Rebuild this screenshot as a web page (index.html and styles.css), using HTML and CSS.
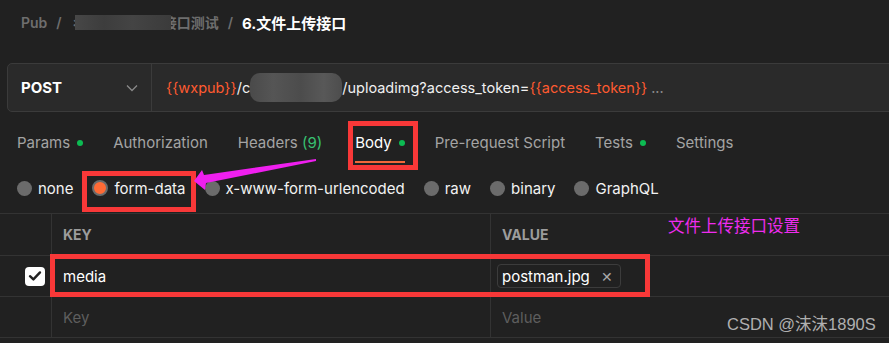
FILE: index.html
```html
<!DOCTYPE html>
<html>
<head>
<meta charset="utf-8">
<link rel="stylesheet" href="styles.css">
</head>
<body>
<div class="page">
  <div class="crumbs">
    <span class="crumb">Pub</span><span class="sep">/</span>
    <span class="crumb">彳<span class="blur-a"></span>接口测试</span><span class="sep">/</span>
    <span class="current">6.文件上传接口</span>
  </div>

  <div class="urlbar">
    <div class="method">
      <span>POST</span>
      <svg class="chev" width="12" height="8" viewBox="0 0 12 8"><path d="M1 1.5 L6 6.5 L11 1.5" fill="none" stroke="#8a8a8a" stroke-width="1.3"/></svg>
    </div>
    <div class="url"><span class="var">{{wxpub}}</span>/c<span class="blur-b"></span>/uploadimg?access_token=<span class="var">{{access_token}}</span><span class="more">...</span></div>
  </div>

  <div class="tabs">
    <div class="tab">Params<i class="dot"></i></div>
    <div class="tab">Authorization</div>
    <div class="tab headers">Headers <span class="count">(9)</span></div>
    <div class="tab active">Body<i class="dot"></i></div>
    <div class="tab">Pre-request Script</div>
    <div class="tab">Tests<i class="dot"></i></div>
    <div class="tab">Settings</div>
  </div>

  <div class="radios">
    <label class="radio"><i class="circle"></i>none</label>
    <label class="radio"><i class="circle on"></i>form-data</label>
    <label class="radio"><i class="circle"></i>x-www-form-urlencoded</label>
    <label class="radio"><i class="circle"></i>raw</label>
    <label class="radio"><i class="circle"></i>binary</label>
    <label class="radio"><i class="circle"></i>GraphQL</label>
  </div>

  <div class="table">
    <div class="row head">
      <div class="c0"></div>
      <div class="c1">KEY</div>
      <div class="c2">VALUE</div>
    </div>
    <div class="row">
      <div class="c0"><span class="check"><svg width="14" height="12" viewBox="0 0 14 12"><path d="M2 6.2 L5.4 9.4 L12 2.4" fill="none" stroke="#222" stroke-width="2.4" stroke-linecap="round" stroke-linejoin="round"/></svg></span></div>
      <div class="c1 val">media</div>
      <div class="c2 chipcell"><span class="chip">postman.jpg<span class="x">✕</span></span></div>
    </div>
    <div class="row">
      <div class="c0"></div>
      <div class="c1 ph">Key</div>
      <div class="c2 ph">Value</div>
    </div>
  </div>
</div>

<div class="box box-body"></div>
<div class="box box-form"></div>
<div class="box box-row"></div>
<svg class="arrow" width="889" height="343" viewBox="0 0 889 343">
  <polygon points="194,181 202,170 204,175 316,159 316,161 206,183 205,190" fill="#ef1fef"/>
</svg>
<div class="note">文件上传接口设置</div>
<div class="mark">CSDN @沫沫1890S</div>
</body>
</html>
```

FILE: styles.css
```css
html, body {
  margin: 0;
  padding: 0;
  background: #212121;
  overflow: hidden;
}
body {
  width: 889px;
  height: 343px;
  position: relative;
  font-family: Inter, "Noto Sans CJK SC", sans-serif;
  font-size: 15px;
  color: #e8e8e8;
}

.crumbs {
  height: 44px;
  display: flex;
  align-items: center;
  padding-left: 21px;
  font-weight: 600;
  font-size: 14px;
  color: #6e6e6e;
}
.sep { margin: 0 9px 0 11px; color: #6e6e6e; }
.blur-a {
  display: inline-block;
  width: 96px;
  height: 15px;
  vertical-align: -2px;
  margin: 0 -8px 0 -10px;
  position: relative;
  background: linear-gradient(90deg, #474747 0%, #3d3d3d 30%, #444 60%, #3b3b3b 100%);
}
.crumb + .sep { margin-left: 9px; }
.current { color: #ffffff; font-weight: 700; font-size: 15px; }

.urlbar {
  margin: 19px 0 0 7px;
  width: 900px;
  height: 47px;
  border: 1px solid #3b3b3b;
  border-radius: 5px;
  background: #2a2a2a;
  display: flex;
  align-items: center;
}
.method {
  height: 100%;
  padding: 0 13px 0 13px;
  border-right: 1px solid #3b3b3b;
  display: flex;
  align-items: center;
  justify-content: space-between;
  font-weight: 700;
  font-size: 15px;
  color: #fff;
  box-sizing: border-box;
  flex: 0 0 144px;
}
.url {
  padding-left: 14px;
  font-size: 14.5px;
  color: #f0f0f0;
  white-space: nowrap;
  display: flex;
  align-items: center;
}
.var { color: #ff5a30; }
.more { color: #8a8a8a; margin-left: 4px; }
.blur-b {
  display: inline-block;
  width: 92px;
  height: 29px;
  border-radius: 10px;
  background: linear-gradient(90deg, #4a4a4a 0%, #555 25%, #4c4c4c 55%, #585858 80%, #4d4d4d 100%);
}

.tabs {
  display: flex;
  margin-top: 12px;
  padding-left: 17px;
  gap: 30px;
  height: 39px;
}
.tab {
  height: 37px;
  display: flex;
  align-items: center;
  color: #a4a4a4;
  border-bottom: 2px solid transparent;
  white-space: pre;
}
.tab.headers { margin-right: 3px; }
.tab.active { color: #fff; border-bottom-color: #f2683a; }
.count { color: #38c172; }
.dot {
  width: 6px;
  height: 6px;
  border-radius: 50%;
  background: #0cbb52;
  margin-left: 7px;
}

.radios {
  height: 50px;
  display: flex;
  align-items: center;
  padding-left: 17px;
  gap: 19px;
}
.radio {
  display: flex;
  align-items: center;
  gap: 6px;
  color: #f2f2f2;
}
.circle {
  width: 15px;
  height: 15px;
  border-radius: 50%;
  background: #6b6b6b;
  box-sizing: border-box;
}
.circle.on {
  width: 16px;
  height: 16px;
  background: #ff6a35;
  border: 2px solid #6b6b6b;
}

.table { border-top: 1px solid #333; }
.row {
  display: flex;
  height: 40px;
  border-bottom: 1px solid #333;
}
.row.head { height: 41px; }
.c0 {
  width: 52px;
  border-right: 1px solid #333;
  box-sizing: border-box;
  display: flex;
  align-items: center;
  justify-content: flex-end;
  padding-right: 6px;
}
.c1 {
  width: 439px;
  border-right: 1px solid #333;
  box-sizing: border-box;
  display: flex;
  align-items: center;
  padding-left: 11px;
}
.c2 {
  flex: 1;
  display: flex;
  align-items: center;
  padding-left: 11px;
}
.head .c1, .head .c2 {
  font-weight: 700;
  font-size: 14px;
  color: #9c9c9c;
}
.val { color: #fff; }
.ph { color: #5e5e5e; }
.check {
  width: 20px;
  height: 19px;
  border-radius: 4px;
  background: #fff;
  display: flex;
  align-items: center;
  justify-content: center;
}
.chipcell { padding-left: 6px; }
.chip {
  height: 22px;
  display: flex;
  align-items: center;
  padding: 0 7px 0 4px;
  border: 1px solid #3c3c3c;
  border-radius: 4px;
  color: #fff;
}
.x { color: #a8a8a8; font-size: 14px; margin-left: 11px; }

.box {
  position: absolute;
  border: 5px solid #f83838;
  box-sizing: border-box;
}
.box-body { left: 348px; top: 121px; width: 70px; height: 49px; }
.box-form { left: 82px; top: 171px; width: 114px; height: 41px; }
.box-row { left: 50px; top: 254px; width: 600px; height: 43px; }
.arrow { position: absolute; left: 0; top: 0; }
.note {
  position: absolute;
  left: 668px;
  top: 214px;
  font-size: 16.5px;
  color: #ee2cee;
  font-family: "Noto Sans CJK SC", sans-serif;
  line-height: 22px;
}
.mark {
  position: absolute;
  left: 727px;
  top: 314px;
  font-size: 16.5px;
  color: #b0b0b0;
  font-family: "Liberation Sans", "Noto Sans CJK SC", sans-serif;
  line-height: 20px;
}
```
